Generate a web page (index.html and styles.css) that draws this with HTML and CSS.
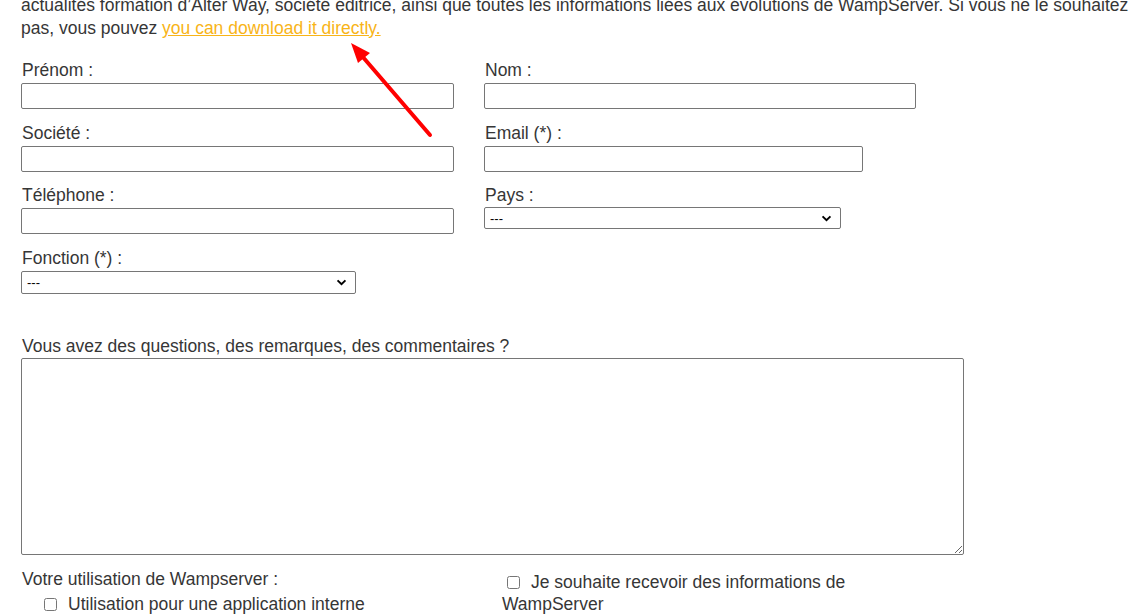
FILE: index.html
```html
<!DOCTYPE html>
<html lang="fr">
<head>
<meta charset="utf-8">
<title>WampServer</title>
<link rel="stylesheet" href="styles.css">
</head>
<body>
<div class="page">
  <p class="intro">actualités formation d’Alter Way, société éditrice, ainsi que toutes les informations liées aux évolutions de WampServer. Si vous ne le souhaitez<br>pas, vous pouvez <a href="#" class="dl">you can download it directly.</a></p>

  <form class="form">
    <div class="row">
      <div class="field left">
        <label class="lbl">Prénom :</label>
        <input type="text" class="txt w433">
      </div>
      <div class="field">
        <label class="lbl">Nom :</label>
        <input type="text" class="txt w432">
      </div>
    </div>
    <div class="row">
      <div class="field left">
        <label class="lbl">Société :</label>
        <input type="text" class="txt w433">
      </div>
      <div class="field">
        <label class="lbl">Email (*) :</label>
        <input type="text" class="txt w379">
      </div>
    </div>
    <div class="row">
      <div class="field left">
        <label class="lbl">Téléphone :</label>
        <input type="text" class="txt w433">
      </div>
      <div class="field">
        <label class="lbl">Pays :</label>
        <select class="sel w357 up1"><option>---</option></select>
      </div>
    </div>
    <div class="row">
      <div class="field left">
        <label class="lbl">Fonction (*) :</label>
        <select class="sel w335"><option>---</option></select>
      </div>
    </div>

    <div class="question">
      <label class="lbl">Vous avez des questions, des remarques, des commentaires ?</label>
      <textarea class="area"></textarea>
    </div>

    <div class="bottom">
      <div class="usage">
        <div class="line">Votre utilisation de Wampserver :</div>
        <div class="line item"><input type="checkbox" class="chk"><span class="ctext">Utilisation pour une application interne</span></div>
      </div>
      <div class="news">
        <input type="checkbox" class="chk"><span class="ctext">Je souhaite recevoir des informations de</span><br>WampServer
      </div>
    </div>
  </form>

  <svg class="arrow" width="1135" height="615" viewBox="0 0 1135 615">
    <line x1="430" y1="135" x2="362" y2="56" stroke="#ff0000" stroke-width="4" stroke-linecap="round"/>
    <polygon points="351,43 370,53 358,63" fill="#ff0000"/>
  </svg>
</div>
</body>
</html>
```

FILE: styles.css
```css
html, body {
  margin: 0;
  padding: 0;
  background: #ffffff;
}

.page {
  position: relative;
  width: 1135px;
  height: 615px;
  overflow: hidden;
  font-family: "Liberation Sans", Arial, sans-serif;
  font-size: 17.5px;
  color: #363636;
}

.intro {
  margin: -6px 0 0 0;
  padding-left: 21px;
  line-height: 23px;
  white-space: nowrap;
}

.dl {
  color: #f8b418;
  text-decoration: underline;
}

.form {
  padding-left: 21px;
  margin-top: 19px;
}

.row {
  display: flex;
  margin-bottom: 12.5px;
}

.field {
  display: flex;
  flex-direction: column;
  align-items: flex-start;
}

.field.left {
  width: 463px;
}

.lbl {
  display: block;
  line-height: 22px;
  margin-bottom: 2px;
  padding-left: 1px;
}

.txt {
  box-sizing: border-box;
  height: 26px;
  margin: 0;
  padding: 1px 2px;
  border: 1px solid #767676;
  border-radius: 2px;
  background: #fff;
  font-family: "Liberation Sans", Arial, sans-serif;
  font-size: 13px;
}

.w433 { width: 433px; }
.w432 { width: 432px; }
.w379 { width: 379px; }
.w357 { width: 357px; }
.w335 { width: 335px; }

.sel {
  box-sizing: border-box;
  height: 23px;
  margin: 0;
  padding: 0 24px 0 5px;
  font-family: "Liberation Sans", Arial, sans-serif;
  font-size: 13px;
  color: #000;
  border: 1px solid #767676;
  border-radius: 2px;
  -webkit-appearance: none;
  appearance: none;
  background-color: #fff;
  background-image: url("data:image/svg+xml;utf8,<svg xmlns='http://www.w3.org/2000/svg' width='12' height='8' viewBox='0 0 12 8'><path d='M1.5 1.5 L6 6 L10.5 1.5' fill='none' stroke='black' stroke-width='2.2'/></svg>");
  background-repeat: no-repeat;
  background-position: right 8px center;
  background-size: 11px 7px;
}

.up1 {
  margin-top: -1px;
  height: 22px;
}

.question {
  margin-top: 41.5px;
}

.question .lbl {
  margin-bottom: 1px;
}

.area {
  display: block;
  box-sizing: border-box;
  width: 943px;
  height: 197px;
  margin: 0;
  border: 1px solid #767676;
  border-radius: 2px;
  resize: both;
  font-family: "Liberation Sans", Arial, sans-serif;
}

.bottom {
  display: flex;
  margin-top: 13px;
}

.usage {
  width: 481px;
}

.line {
  line-height: 22px;
  padding-left: 1px;
}

.item {
  margin-top: 3px;
  padding-left: 19px;
  display: flex;
  align-items: center;
}

.chk {
  width: 13px;
  height: 13px;
  margin: 0 8px 0 4px;
}

.item .chk {
  margin: 0 11px 0 4px;
}

.news {
  padding-top: 3px;
  line-height: 22px;
}

.news .chk {
  vertical-align: -1px;
  margin: 0 11px 0 5px;
}

.arrow {
  position: absolute;
  top: 0;
  left: 0;
  pointer-events: none;
}
```
